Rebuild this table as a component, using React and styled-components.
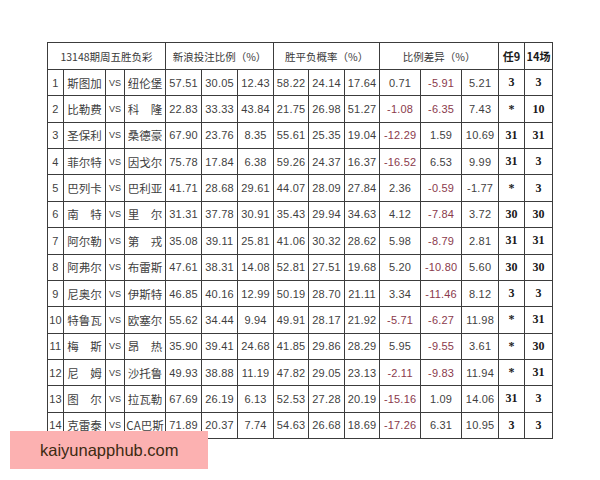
import React from 'react'
import styled, { createGlobalStyle } from 'styled-components'

const GlobalStyle = createGlobalStyle`
  html, body {
    margin: 0;
    padding: 0;
    background: #ffffff;
  }
`

const widths = [16, 42, 19, 41, 36, 36, 36, 35, 36, 35, 41, 41, 37, 26, 28]

const rows = [
  ['1', '斯图加', '纽伦堡', '57.51', '30.05', '12.43', '58.22', '24.14', '17.64', '0.71', '-5.91', '5.21', '3', '3'],
  ['2', '比勒费', '科　隆', '22.83', '33.33', '43.84', '21.75', '26.98', '51.27', '-1.08', '-6.35', '7.43', '*', '10'],
  ['3', '圣保利', '桑德豪', '67.90', '23.76', '8.35', '55.61', '25.35', '19.04', '-12.29', '1.59', '10.69', '31', '31'],
  ['4', '菲尔特', '因戈尔', '75.78', '17.84', '6.38', '59.26', '24.37', '16.37', '-16.52', '6.53', '9.99', '31', '3'],
  ['5', '巴列卡', '巴利亚', '41.71', '28.68', '29.61', '44.07', '28.09', '27.84', '2.36', '-0.59', '-1.77', '*', '3'],
  ['6', '南　特', '里　尔', '31.31', '37.78', '30.91', '35.43', '29.94', '34.63', '4.12', '-7.84', '3.72', '30', '30'],
  ['7', '阿尔勒', '第　戎', '35.08', '39.11', '25.81', '41.06', '30.32', '28.62', '5.98', '-8.79', '2.81', '31', '31'],
  ['8', '阿弗尔', '布雷斯', '47.61', '38.31', '14.08', '52.81', '27.51', '19.68', '5.20', '-10.80', '5.60', '30', '30'],
  ['9', '尼奥尔', '伊斯特', '46.85', '40.16', '12.99', '50.19', '28.70', '21.11', '3.34', '-11.46', '8.12', '3', '3'],
  ['10', '特鲁瓦', '欧塞尔', '55.62', '34.44', '9.94', '49.91', '28.17', '21.92', '-5.71', '-6.27', '11.98', '*', '31'],
  ['11', '梅　斯', '昂　热', '35.90', '39.41', '24.68', '41.85', '29.86', '28.29', '5.95', '-9.55', '3.61', '*', '30'],
  ['12', '尼　姆', '沙托鲁', '49.93', '38.88', '11.19', '47.82', '29.05', '23.13', '-2.11', '-9.83', '11.94', '*', '31'],
  ['13', '图　尔', '拉瓦勒', '67.69', '26.19', '6.13', '52.53', '27.28', '20.19', '-15.16', '1.09', '14.06', '31', '3'],
  ['14', '克雷泰', 'CA巴斯', '71.89', '20.37', '7.74', '54.63', '26.68', '18.69', '-17.26', '6.31', '10.95', '3', '3'],
]

const Page = styled.div`
  position: relative;
  width: 600px;
  height: 480px;
  padding: 42px 0 0 47px;
  box-sizing: border-box;
  background: #fff;
`

const Table = styled.table`
  border-collapse: collapse;
  table-layout: fixed;
  width: 505px;
  color: #3a3a3a;
`

const HeadRow = styled.tr`
  height: 27px;
`

const Row = styled.tr`
  height: 26.36px;
`

const Head = styled.th`
  border: 1px solid #3c3c3c;
  padding: 0;
  font-family: 'Noto Sans CJK SC', 'Liberation Sans', sans-serif;
  font-weight: ${(p) => (p.$bold ? 700 : 400)};
  font-size: ${(p) => (p.$bold ? '11px' : '10.5px')};
  color: ${(p) => (p.$bold ? '#1a1a1a' : '#3a3a3a')};
  text-align: center;
  white-space: nowrap;
  overflow: hidden;
`

const fonts = {
  name: "'Noto Sans CJK SC', sans-serif",
  pick: "'Liberation Serif', serif",
  vs: "'Liberation Sans', sans-serif",
  num: "'Liberation Sans', sans-serif",
}

const sizes = { name: '11.5px', pick: '12px', vs: '9px', num: '11px' }

const Cell = styled.td`
  border: 1px solid #3c3c3c;
  padding: 0;
  text-align: center;
  white-space: nowrap;
  overflow: hidden;
  font-family: ${(p) => fonts[p.$kind]};
  font-size: ${(p) => sizes[p.$kind]};
  font-weight: ${(p) => (p.$kind === 'pick' ? 700 : 400)};
  color: ${(p) => (p.$red ? '#8a3a4c' : p.$kind === 'pick' ? '#1a1a1a' : '#3f3f3f')};
  letter-spacing: ${(p) => (p.$kind === 'num' ? '0.2px' : '0')};
`

const Watermark = styled.div`
  position: absolute;
  left: 10px;
  top: 431px;
  width: 198px;
  height: 38px;
  background: #fcb1b1;
  display: flex;
  align-items: center;
  padding-left: 30px;
  box-sizing: border-box;
  font-family: 'Liberation Sans', Arial, sans-serif;
  font-size: 16.5px;
  color: #3d2a12;
`

const kindOf = (i) => {
  if (i === 1 || i === 3) return 'name'
  if (i === 2) return 'vs'
  if (i >= 13) return 'pick'
  return 'num'
}

const App = () => {
  return (
    <>
      <GlobalStyle />
      <Page>
        <Table>
          <colgroup>
            {widths.map((w, i) => (
              <col key={i} style={{ width: w }} />
            ))}
          </colgroup>
          <thead>
            <HeadRow>
              <Head colSpan={4}>13148期周五胜负彩</Head>
              <Head colSpan={3}>新浪投注比例（%）</Head>
              <Head colSpan={3}>胜平负概率（%）</Head>
              <Head colSpan={3}>比例差异（%）</Head>
              <Head $bold>任9</Head>
              <Head $bold>14场</Head>
            </HeadRow>
          </thead>
          <tbody>
            {rows.map((r) => {
              const cells = [r[0], r[1], 'VS', ...r.slice(2)]
              return (
                <Row key={r[0]}>
                  {cells.map((c, i) => {
                    const red =
                      i >= 10 && i <= 12 && c.startsWith('-') && !(r[0] === '5' && i === 12)
                    return (
                      <Cell key={i} $kind={kindOf(i)} $red={red}>
                        {c}
                      </Cell>
                    )
                  })}
                </Row>
              )
            })}
          </tbody>
        </Table>
        <Watermark>kaiyunapphub.com</Watermark>
      </Page>
    </>
  )
}

export default App
